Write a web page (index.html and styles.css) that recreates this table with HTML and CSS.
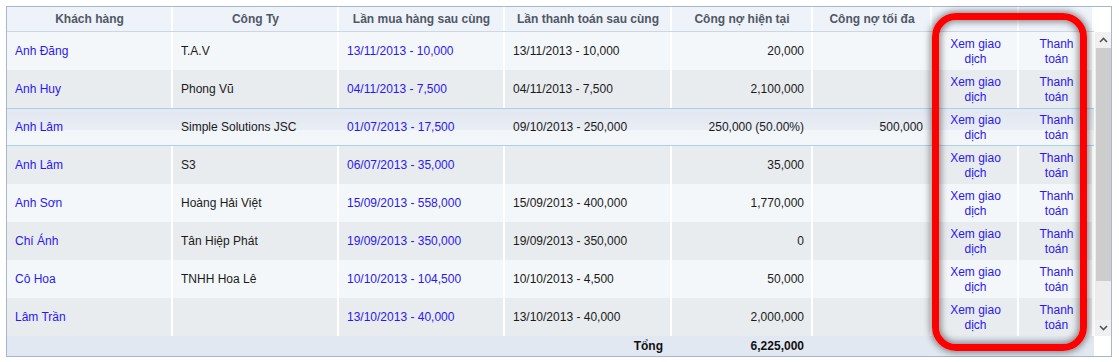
FILE: index.html
```html
<!DOCTYPE html>
<html lang="vi">
<head>
<meta charset="utf-8">
<title>Công nợ khách hàng</title>
<link rel="stylesheet" href="styles.css">
</head>
<body>
<div class="grid">
  <div class="head">
    <div class="hrow">
      <div class="c c1">Khách hàng</div>
      <div class="c c2">Công Ty</div>
      <div class="c c3">Lần mua hàng sau cùng</div>
      <div class="c c4">Lần thanh toán sau cùng</div>
      <div class="c c5">Công nợ hiện tại</div>
      <div class="c c6">Công nợ tối đa</div>
      <div class="c c7"></div>
      <div class="c c8"></div>
    </div>
    <div class="hscroll"></div>
  </div>
  <div class="body">
    <div class="rows">
      <div class="row odd">
        <div class="c c1"><a class="lnk">Anh Đăng</a></div>
        <div class="c c2">T.A.V</div>
        <div class="c c3"><a class="lnk">13/11/2013 - 10,000</a></div>
        <div class="c c4">13/11/2013 - 10,000</div>
        <div class="c c5 r">20,000</div>
        <div class="c c6 r"></div>
        <div class="c c7 act"><a class="lnk">Xem giao<br>dịch</a></div>
        <div class="c c8 act"><a class="lnk">Thanh<br>toán</a></div>
      </div>
      <div class="row even">
        <div class="c c1"><a class="lnk">Anh Huy</a></div>
        <div class="c c2">Phong Vũ</div>
        <div class="c c3"><a class="lnk">04/11/2013 - 7,500</a></div>
        <div class="c c4">04/11/2013 - 7,500</div>
        <div class="c c5 r">2,100,000</div>
        <div class="c c6 r"></div>
        <div class="c c7 act"><a class="lnk">Xem giao<br>dịch</a></div>
        <div class="c c8 act"><a class="lnk">Thanh<br>toán</a></div>
      </div>
      <div class="row hover">
        <div class="c c1"><a class="lnk">Anh Lâm</a></div>
        <div class="c c2">Simple Solutions JSC</div>
        <div class="c c3"><a class="lnk">01/07/2013 - 17,500</a></div>
        <div class="c c4">09/10/2013 - 250,000</div>
        <div class="c c5 r">250,000 (50.00%)</div>
        <div class="c c6 r">500,000</div>
        <div class="c c7 act"><a class="lnk">Xem giao<br>dịch</a></div>
        <div class="c c8 act"><a class="lnk">Thanh<br>toán</a></div>
      </div>
      <div class="row even">
        <div class="c c1"><a class="lnk">Anh Lâm</a></div>
        <div class="c c2">S3</div>
        <div class="c c3"><a class="lnk">06/07/2013 - 35,000</a></div>
        <div class="c c4"></div>
        <div class="c c5 r">35,000</div>
        <div class="c c6 r"></div>
        <div class="c c7 act"><a class="lnk">Xem giao<br>dịch</a></div>
        <div class="c c8 act"><a class="lnk">Thanh<br>toán</a></div>
      </div>
      <div class="row odd">
        <div class="c c1"><a class="lnk">Anh Sơn</a></div>
        <div class="c c2">Hoàng Hải Việt</div>
        <div class="c c3"><a class="lnk">15/09/2013 - 558,000</a></div>
        <div class="c c4">15/09/2013 - 400,000</div>
        <div class="c c5 r">1,770,000</div>
        <div class="c c6 r"></div>
        <div class="c c7 act"><a class="lnk">Xem giao<br>dịch</a></div>
        <div class="c c8 act"><a class="lnk">Thanh<br>toán</a></div>
      </div>
      <div class="row even">
        <div class="c c1"><a class="lnk">Chí Ánh</a></div>
        <div class="c c2">Tân Hiệp Phát</div>
        <div class="c c3"><a class="lnk">19/09/2013 - 350,000</a></div>
        <div class="c c4">19/09/2013 - 350,000</div>
        <div class="c c5 r">0</div>
        <div class="c c6 r"></div>
        <div class="c c7 act"><a class="lnk">Xem giao<br>dịch</a></div>
        <div class="c c8 act"><a class="lnk">Thanh<br>toán</a></div>
      </div>
      <div class="row odd">
        <div class="c c1"><a class="lnk">Cô Hoa</a></div>
        <div class="c c2">TNHH Hoa Lê</div>
        <div class="c c3"><a class="lnk">10/10/2013 - 104,500</a></div>
        <div class="c c4">10/10/2013 - 4,500</div>
        <div class="c c5 r">50,000</div>
        <div class="c c6 r"></div>
        <div class="c c7 act"><a class="lnk">Xem giao<br>dịch</a></div>
        <div class="c c8 act"><a class="lnk">Thanh<br>toán</a></div>
      </div>
      <div class="row even">
        <div class="c c1"><a class="lnk">Lâm Trần</a></div>
        <div class="c c2"></div>
        <div class="c c3"><a class="lnk">13/10/2013 - 40,000</a></div>
        <div class="c c4">13/10/2013 - 40,000</div>
        <div class="c c5 r">2,000,000</div>
        <div class="c c6 r"></div>
        <div class="c c7 act"><a class="lnk">Xem giao<br>dịch</a></div>
        <div class="c c8 act"><a class="lnk">Thanh<br>toán</a></div>
      </div>
    </div>
    <div class="vscroll">
      <div class="sbtn">
        <svg width="9" height="6" viewBox="0 0 9 6"><path d="M1 5 L4.5 1.5 L8 5" fill="none" stroke="#555" stroke-width="1.6"/></svg>
      </div>
      <div class="thumb"></div>
      <div class="track"></div>
      <div class="sbtn">
        <svg width="9" height="6" viewBox="0 0 9 6"><path d="M1 1 L4.5 4.5 L8 1" fill="none" stroke="#555" stroke-width="1.6"/></svg>
      </div>
    </div>
  </div>
  <div class="foot">
    <div class="frow">
      <div class="c c1"></div>
      <div class="c c2"></div>
      <div class="c c3"></div>
      <div class="c c4 r b">Tổng</div>
      <div class="c c5 r b">6,225,000</div>
      <div class="c c6"></div>
      <div class="c c7"></div>
      <div class="c c8"></div>
    </div>
    <div class="fscroll"></div>
  </div>
  <div class="highlight"></div>
</div>
</body>
</html>
```

FILE: styles.css
```css
html, body {
  margin: 0;
  padding: 0;
  background: #ffffff;
}

body {
  font-family: "Liberation Sans", Arial, sans-serif;
  font-size: 12px;
  color: #1a1a1a;
}

.grid {
  position: relative;
  margin: 6px 0 0 6px;
  width: 1104px;
  border: 1px solid #a8b6cb;
  background: #ffffff;
}

.head {
  display: flex;
  height: 25px;
}

.hrow {
  display: flex;
  width: 1087px;
  background: #eef2f9;
  border-bottom: 1px solid #cdd6e3;
  box-sizing: border-box;
}

.hrow .c {
  justify-content: center;
  font-weight: bold;
  color: #505866;
}

.hscroll {
  width: 17px;
  background: #ffffff;
}

.c {
  display: flex;
  align-items: center;
  box-sizing: border-box;
  padding: 0 7px 0 8px;
  border-right: 2px solid #ffffff;
  line-height: 15px;
  white-space: nowrap;
}

.c1 { width: 166px; }
.c2 { width: 166px; }
.c3 { width: 166px; }
.c4 { width: 167px; }
.c5 { width: 141px; }
.c6 { width: 119px; }
.c7 { width: 87px; }
.c8 { width: 75px; }

.r { justify-content: flex-end; }
.b { font-weight: bold; color: #111111; }

.act {
  justify-content: center;
  text-align: center;
  padding: 1px 0 0 2px;
}

.lnk {
  color: #2b17f2;
  text-decoration: none;
}

.body {
  display: flex;
}

.rows {
  display: flex;
  flex-direction: column;
  width: 1087px;
}

.row {
  display: flex;
  height: 38px;
  box-sizing: border-box;
}

.row.odd { background: #f4f7f9; }
.row.even { background: #e8ecef; }

.row.hover {
  background: linear-gradient(#e2e7f0 0%, #e9edf4 58%, #f3f6f9 58%, #f4f7f9 100%);
  border-top: 1px solid #a6d3e7;
  border-bottom: 1px solid #a6d3e7;
}

.row.hover .c {
  border-right-color: transparent;
}

.vscroll {
  width: 17px;
  display: flex;
  flex-direction: column;
  background: #eeeeee;
  border-left: 1px solid #ffffff;
  box-sizing: border-box;
}

.sbtn {
  height: 16px;
  display: flex;
  align-items: center;
  justify-content: center;
  background: #f0f0f0;
}

.thumb {
  height: 233px;
  margin-left: 1px;
  background: #cdcdcd;
}

.track {
  flex: 1;
  background: #ececec;
}

.foot {
  display: flex;
  height: 20px;
}

.frow {
  display: flex;
  width: 1087px;
  background: #e2e8f1;
}

.frow .c {
  border-right-color: transparent;
}

.fscroll {
  width: 17px;
  background: #ffffff;
}

.highlight {
  position: absolute;
  left: 925px;
  top: 6px;
  width: 155px;
  height: 338px;
  box-sizing: border-box;
  border: 7px solid #ff0000;
  border-radius: 24px;
  box-shadow: 0 0 6px 2px rgba(70, 70, 70, 0.6), inset 0 0 6px 2px rgba(70, 70, 70, 0.6);
  pointer-events: none;
}
```
